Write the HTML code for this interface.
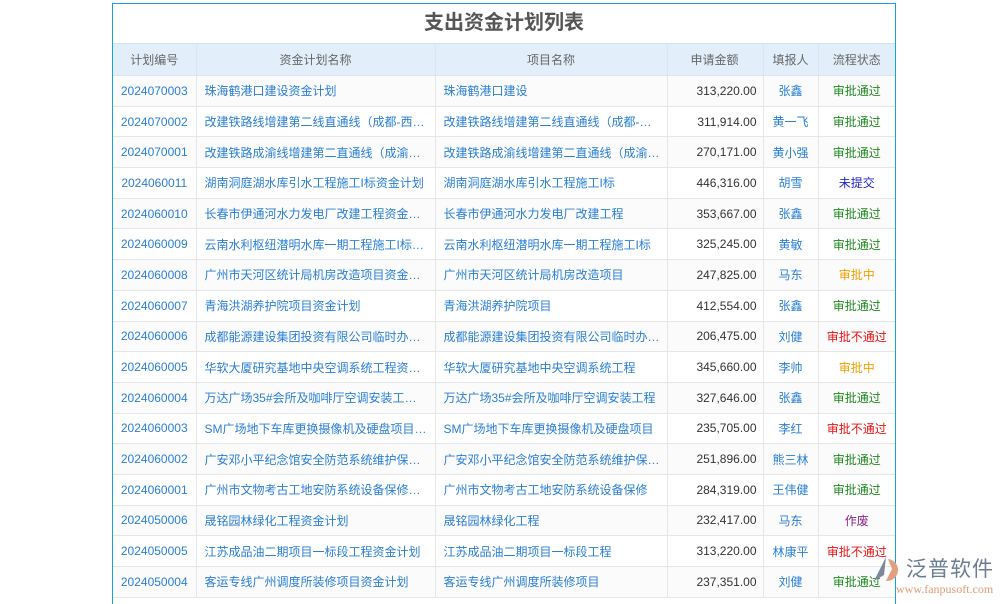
<!DOCTYPE html>
<html><head><meta charset="utf-8"><style>
body{margin:0;width:1000px;height:600px;overflow:hidden;background:#fff;font-family:"Liberation Sans","Noto Sans CJK SC",sans-serif;}
.box{position:absolute;left:112px;top:3px;width:782px;height:600px;border:1px solid #1aa0e0;border-bottom:none;}
.title{height:39px;line-height:39px;text-align:center;font-size:20px;font-weight:bold;color:#555;border-bottom:1px solid #cfe3f3;}
table{border-collapse:collapse;width:782px;table-layout:fixed;font-size:12px;}
th{background:#e2effb;color:#666;font-weight:normal;height:29px;border:1px solid #d6e6f2;border-top:none;}
td{height:29.7px;border:1px solid #e6e6e6;color:#2a7fd4;padding:0 6px 0 8px;white-space:nowrap;overflow:hidden;text-overflow:ellipsis;}
tr:nth-child(even) td{background:#fbfbfb;}
td:first-child{text-align:center;padding:0;}
td.n{text-align:right;color:#333;}
td.c{text-align:center;padding:0;}
th:first-child,td:first-child{border-left:none}
th:last-child,td:last-child{border-right:none}
.g{color:#1f8a1f}.r{color:#ee1111}.o{color:#f0a000}.b{color:#2222cc}.p{color:#882288}
.logo{position:absolute;left:906px;top:553px;font-size:21px;color:#6a7d92;letter-spacing:1px;white-space:nowrap;}
.url{position:absolute;left:896px;top:582px;font-size:12px;color:#e39a78;font-family:"Liberation Serif",serif;white-space:nowrap;}
</style></head><body>
<div class="box">
<div class="title">支出资金计划列表</div>
<table>
<colgroup><col style="width:83px"><col style="width:239px"><col style="width:232px"><col style="width:96px"><col style="width:55px"><col style="width:77px"></colgroup>
<tr><th>计划编号</th><th>资金计划名称</th><th>项目名称</th><th style="text-align:right;padding-right:24px">申请金额</th><th>填报人</th><th>流程状态</th></tr>
<tr><td>2024070003</td><td>珠海鹤港口建设资金计划</td><td>珠海鹤港口建设</td><td class="n">313,220.00</td><td class="c">张鑫</td><td class="c g">审批通过</td></tr>
<tr><td>2024070002</td><td>改建铁路线增建第二线直通线（成都-西安）资金计划</td><td>改建铁路线增建第二线直通线（成都-西安）</td><td class="n">311,914.00</td><td class="c">黄一飞</td><td class="c g">审批通过</td></tr>
<tr><td>2024070001</td><td>改建铁路成渝线增建第二直通线（成渝枢纽）资金</td><td>改建铁路成渝线增建第二直通线（成渝枢纽）</td><td class="n">270,171.00</td><td class="c">黄小强</td><td class="c g">审批通过</td></tr>
<tr><td>2024060011</td><td>湖南洞庭湖水库引水工程施工I标资金计划</td><td>湖南洞庭湖水库引水工程施工I标</td><td class="n">446,316.00</td><td class="c">胡雪</td><td class="c b">未提交</td></tr>
<tr><td>2024060010</td><td>长春市伊通河水力发电厂改建工程资金计划</td><td>长春市伊通河水力发电厂改建工程</td><td class="n">353,667.00</td><td class="c">张鑫</td><td class="c g">审批通过</td></tr>
<tr><td>2024060009</td><td>云南水利枢纽潜明水库一期工程施工I标资金计划</td><td>云南水利枢纽潜明水库一期工程施工I标</td><td class="n">325,245.00</td><td class="c">黄敏</td><td class="c g">审批通过</td></tr>
<tr><td>2024060008</td><td>广州市天河区统计局机房改造项目资金计划</td><td>广州市天河区统计局机房改造项目</td><td class="n">247,825.00</td><td class="c">马东</td><td class="c o">审批中</td></tr>
<tr><td>2024060007</td><td>青海洪湖养护院项目资金计划</td><td>青海洪湖养护院项目</td><td class="n">412,554.00</td><td class="c">张鑫</td><td class="c g">审批通过</td></tr>
<tr><td>2024060006</td><td>成都能源建设集团投资有限公司临时办公场所资金</td><td>成都能源建设集团投资有限公司临时办公场所</td><td class="n">206,475.00</td><td class="c">刘健</td><td class="c r">审批不通过</td></tr>
<tr><td>2024060005</td><td>华软大厦研究基地中央空调系统工程资金计划</td><td>华软大厦研究基地中央空调系统工程</td><td class="n">345,660.00</td><td class="c">李帅</td><td class="c o">审批中</td></tr>
<tr><td>2024060004</td><td>万达广场35#会所及咖啡厅空调安装工程资金计划</td><td>万达广场35#会所及咖啡厅空调安装工程</td><td class="n">327,646.00</td><td class="c">张鑫</td><td class="c g">审批通过</td></tr>
<tr><td>2024060003</td><td>SM广场地下车库更换摄像机及硬盘项目资金计划</td><td>SM广场地下车库更换摄像机及硬盘项目</td><td class="n">235,705.00</td><td class="c">李红</td><td class="c r">审批不通过</td></tr>
<tr><td>2024060002</td><td>广安邓小平纪念馆安全防范系统维护保养项目资金</td><td>广安邓小平纪念馆安全防范系统维护保养项目</td><td class="n">251,896.00</td><td class="c">熊三林</td><td class="c g">审批通过</td></tr>
<tr><td>2024060001</td><td>广州市文物考古工地安防系统设备保修资金计划</td><td>广州市文物考古工地安防系统设备保修</td><td class="n">284,319.00</td><td class="c">王伟健</td><td class="c g">审批通过</td></tr>
<tr><td>2024050006</td><td>晟铭园林绿化工程资金计划</td><td>晟铭园林绿化工程</td><td class="n">232,417.00</td><td class="c">马东</td><td class="c p">作废</td></tr>
<tr><td>2024050005</td><td>江苏成品油二期项目一标段工程资金计划</td><td>江苏成品油二期项目一标段工程</td><td class="n">313,220.00</td><td class="c">林康平</td><td class="c r">审批不通过</td></tr>
<tr><td>2024050004</td><td>客运专线广州调度所装修项目资金计划</td><td>客运专线广州调度所装修项目</td><td class="n">237,351.00</td><td class="c">刘健</td><td class="c g">审批通过</td></tr>
</table>
</div>
<svg style="position:absolute;left:872px;top:555px" width="34" height="30" viewBox="0 0 34 30"><path d="M14 2 L2 26 L12 20 Z" fill="#7a8a9c"/><path d="M16 4 A11 11 0 1 1 14 26 L20 14 Z" fill="#e3a080"/></svg>
<div class="logo">泛普软件</div>
<div class="url">www.fanpusoft.com</div>
</body></html>
